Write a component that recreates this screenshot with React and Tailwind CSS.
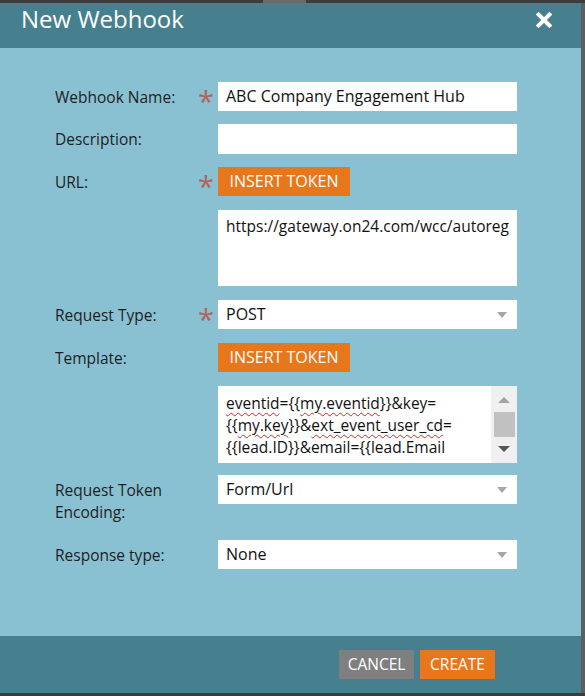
import { useState } from 'react'

const font = { fontFamily: '"Open Sans", "Liberation Sans", sans-serif' }

function Star() {
  return (
    <div className="w-[20px] shrink-0 flex justify-start translate-y-[4px]">
      <span className="text-[29px] leading-[29px] text-[#b5625f]">*</span>
    </div>
  )
}

function Arrow() {
  return (
    <svg width="10" height="6" viewBox="0 0 10 6" className="absolute right-[10px] top-[12px]">
      <path d="M0 0 H10 L5 6 Z" fill="#a6a6a6" />
    </svg>
  )
}

function Select({ value }) {
  return (
    <div className="relative w-[299px] h-[29px] bg-white text-[16px] leading-[29px] pl-[8px] text-[#111]">
      {value}
      <Arrow />
    </div>
  )
}

function Row({ label, required, children, className = '' }) {
  return (
    <div className={`flex items-start ${className}`}>
      <div className="w-[143px] shrink-0 text-[15.5px] leading-[22px] pt-[4px] text-[#1e1e1e]">{label}</div>
      {required ? <Star /> : <div className="w-[20px] shrink-0" />}
      {children}
    </div>
  )
}

function TokenButton() {
  return (
    <button className="w-[132px] h-[29px] bg-[#e8771b] text-white text-[16px] leading-[29px] text-center">
      INSERT TOKEN
    </button>
  )
}

const squiggle = 'underline decoration-wavy decoration-[#e02020] decoration-[1px] underline-offset-[3px]'

export default function App() {
  const [name] = useState('ABC Company Engagement Hub')

  return (
    <div className="w-[585px] h-[696px] bg-[#3c3c3c] overflow-hidden relative" style={font}>
      <div className="absolute left-[263px] top-0 w-[43px] h-[3px] bg-[#6a6a6a]" />
      <div className="absolute left-[581px] top-[3px] w-[4px] h-[690px] bg-[#5c5f60]" />
      <div className="w-[581px] pt-[3px]">
        <div className="h-[45px] bg-[#46808f] flex items-center justify-between pl-[21px] pr-[29px]">
          <h1 className="text-[24px] leading-none text-white -translate-y-[7px]">New Webhook</h1>
          <svg width="16" height="16" viewBox="0 0 16 16" className="-translate-y-[6px]">
            <path d="M2.5 2.5 L13.5 13.5 M13.5 2.5 L2.5 13.5" stroke="white" strokeWidth="4" strokeLinecap="square" />
          </svg>
        </div>

        <div className="h-[588px] bg-[#89c1d3] pl-[55px] pt-[34px]">
          <Row label="Webhook Name:" required>
            <div className="w-[299px] h-[29px] bg-white text-[16px] leading-[29px] pl-[8px] text-[#111]">{name}</div>
          </Row>

          <Row label="Description:" className="mt-[13px]">
            <div className="w-[299px] h-[30px] bg-white" />
          </Row>

          <Row label="URL:" required className="mt-[13px]">
            <TokenButton />
          </Row>

          <div className="flex mt-[14px] pl-[163px]">
            <div className="w-[299px] h-[76px] bg-white text-[15.5px] leading-[22px] pl-[8px] pt-[5px] text-[#111]">
              https://gateway.on24.com/wcc/autoreg
            </div>
          </div>

          <Row label="Request Type:" required className="mt-[14px]">
            <Select value="POST" />
          </Row>

          <Row label="Template:" className="mt-[14px]">
            <TokenButton />
          </Row>

          <div className="flex mt-[14px] pl-[163px]">
            <div className="relative w-[299px] h-[77px] bg-white text-[15.5px] leading-[22px] pl-[8px] pt-[6px] text-[#111] flex">
              <div className="flex-1">
                <div>
                  <span className={squiggle}>eventid</span>={'{{'}
                  <span className={squiggle}>my.eventid</span>
                  {'}}'}&amp;key=
                </div>
                <div>
                  {'{{'}
                  <span className={squiggle}>my.key</span>
                  {'}}'}&amp;
                  <span className={squiggle}>ext_event_user_cd</span>=
                </div>
                <div>{'{{'}lead.ID{'}}'}&amp;email={'{{'}lead.Email</div>
              </div>
              <div className="absolute right-0 top-0 w-[26px] h-[77px] bg-[#f0f0f0] flex flex-col items-center">
                <svg width="12" height="6" viewBox="0 0 12 6" className="mt-[11px]">
                  <path d="M0 6 H12 L6 0 Z" fill="#a3a3a3" />
                </svg>
                <div className="w-[21px] h-[25px] bg-[#c1c1c1] mt-[9px]" />
                <svg width="12" height="6" viewBox="0 0 12 6" className="mt-[9px]">
                  <path d="M0 0 H12 L6 6 Z" fill="#555" />
                </svg>
              </div>
            </div>
          </div>

          <Row label={<>Request Token<br />Encoding:</>} className="mt-[12px]">
            <Select value="Form/Url" />
          </Row>

          <Row label="Response type:" className="mt-[17px]">
            <Select value="None" />
          </Row>
        </div>

        <div className="h-[57px] bg-[#46808f] flex justify-end items-start pt-[14px] pr-[86px] gap-[6px]">
          <button className="w-[75px] h-[29px] bg-[#7f7f7f] text-white text-[15.5px] leading-[29px]">CANCEL</button>
          <button className="w-[75px] h-[29px] bg-[#e8771b] text-white text-[15.5px] leading-[29px]">CREATE</button>
        </div>
      </div>
    </div>
  )
}
